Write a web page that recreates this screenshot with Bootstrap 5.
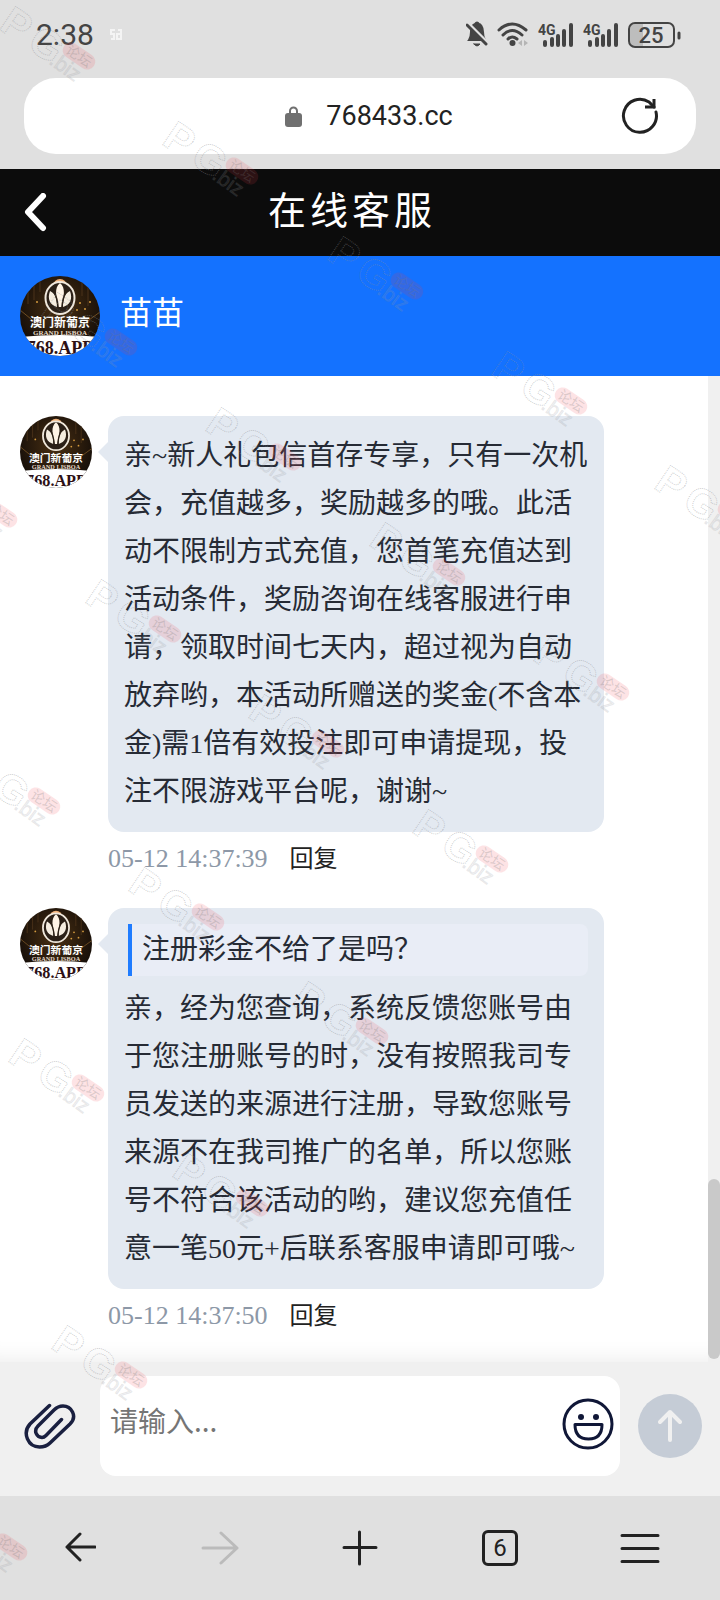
<!DOCTYPE html>
<html lang="zh-CN">
<head>
<meta charset="utf-8">
<meta name="viewport" content="width=device-width, initial-scale=1">
<title>在线客服</title>
<link href="https://cdn.jsdelivr.net/npm/bootstrap@5.3.0/dist/css/bootstrap.min.css" rel="stylesheet">
<style>
  body { font-family: Roboto, "Noto Sans CJK SC", sans-serif; background: #fff; color: #222; }
  svg { display: block; flex: none; }
  .chrome { background: #e0e0e0; }
  .status { height: 78px; padding: 0 38px 8px 36px; color: #444; }
  .clock { font-size: 30px; font-weight: 400; line-height: 36px; }
  .address { height: 76px; margin: 0 24px; padding-left: 18px; border-radius: 32px; }
  .url { font-size: 27px; line-height: 36px; color: #222; }
  .reload { right: 36px; top: 18px; }
  .titlebar { height: 87px; margin-top: 15px; padding: 0 16px 4px 0; background: #0c0c0c; }
  .titlebar h1 { font-size: 38px; line-height: 48px; letter-spacing: 4px; font-weight: 400; }
  .back { left: 20px; top: 24px; }
  .agent { height: 120px; background: #1472ff; padding: 0 20px; gap: 20px; }
  .agent-name { font-size: 32px; line-height: 40px; padding-bottom: 6px; }
  .chat { font-family: "Liberation Serif", "Noto Sans CJK SC", serif; font-size: 28px; line-height: 48px; }
  .thread { min-width: 0; padding: 40px 104px 24px 20px; box-shadow: inset 0 -24px 20px -20px #eee; }
  .msg { gap: 16px; }
  .msg + .msg { margin-top: 28px; }
  .bubble { background: #e3e9f1; color: #262b35; border-radius: 16px; padding: 16px; }
  .bubble::before { content: ""; position: absolute; left: -10px; top: 26px; border: 10px solid transparent; border-left: 0; border-right-color: #e3e9f1; }
  .quote { background: #e9edf6; border-left: 4px solid #1f7cff; border-radius: 0 8px 8px 0; margin: 0 0 9px 4px; padding: 2px 10px; }
  .meta { height: 48px; padding-top: 11px; gap: 22px; line-height: 32px; }
  .stamp { font-size: 26px; color: #8d98a7; }
  .reply { font-size: 24px; line-height: 32px; color: #222; }
  .track { flex: none; width: 12px; background: #f0f0f0; padding-bottom: 3px; }
  .thumb { height: 180px; background: #c9c9c9; border-radius: 6px; }
  .composer { height: 134px; background: #f0f0f0; padding: 14px 18px 20px 24px; }
  .entry { height: 100px; margin: 0 18px 0 24px; }
  .entry textarea { font-family: "Noto Sans CJK SC", sans-serif; font-size: 28px; line-height: 40px; border-radius: 16px; padding: 24px 72px 24px 10px; resize: none; outline: 0; }
  .entry textarea::placeholder { color: #757575; }
  .smile { right: 6px; top: 22px; }
  .send { width: 64px; height: 64px; background: #c5ccd6; }
  .tools { height: 104px; padding: 0 10px; }
  .tabcount { width: 36px; height: 36px; border: 3px solid #222; border-radius: 6px; font-size: 24px; line-height: 30px; color: #222; }
  .stamps { pointer-events: none; }
</style>
</head>
<body>
<svg width="0" height="0" class="position-absolute" aria-hidden="true">
  <defs>
    <radialGradient id="gold" cx=".5" cy=".4" r=".6"><stop offset="0" stop-color="#4a3013"/><stop offset="1" stop-color="#120c08"/></radialGradient>
    <clipPath id="disc"><circle cx="40" cy="40" r="40"/></clipPath>
    <symbol id="avatar" viewBox="0 0 80 80">
      <g clip-path="url(#disc)">
        <rect width="80" height="80" fill="url(#gold)"/>
        <path d="M8 10v18M14 4v20M20 2v14M62 4v16M68 8v22" stroke="#4b321a"/>
        <path d="M0 34L22 52M80 36L58 52" stroke="#6e4d22"/>
        <g fill="#d39a3e"><circle cx="60" cy="27" r="1"/><circle cx="65" cy="33" r="1"/><circle cx="57" cy="34" r="1"/><circle cx="17" cy="26" r="1"/><circle cx="70" cy="26" r="1"/></g>
        <circle cx="40" cy="10" r="7" fill="#f2b27a"/>
        <ellipse cx="40" cy="22" rx="14.500" ry="16" fill="#2b2017" stroke="#f0e8dc" stroke-width="2"/>
        <path d="M40 7c6 5 4 13 1.500 24h-3C36 20 34 12 40 7z" fill="#fff4e6"/>
        <path d="M30 15c6 3 7 9 7 16-7-2-10-8-7-16zM50 15c-6 3-7 9-7 16 7-2 10-8 7-16z" fill="#f5ede0"/>
        <path d="M33 14c3 5 5 11 5 19M47 14c-3 5-5 11-5 19" stroke="#2b2017" fill="none" stroke-width="1.500"/>
        <path d="M0 61q40-4 80 0v19H0z" fill="#fff"/>
        <text x="40" y="51" text-anchor="middle" font-family="Noto Sans CJK SC" font-weight="700" font-size="12" fill="#fff">澳门新葡京</text>
        <text x="40" y="59" text-anchor="middle" font-family="Liberation Serif" font-weight="700" font-size="7" fill="#e6dccb">GRAND LISBOA</text>
        <text x="40" y="78" text-anchor="middle" font-family="Liberation Serif" font-weight="700" font-size="18" fill="#2d1014">768.APP</text>
      </g>
    </symbol>
    <g id="stampmark">
      <g transform="translate(0 25) rotate(34)" fill="none" stroke="#8c8f94" stroke-opacity=".45" stroke-dasharray="1 1" font-family="Liberation Sans" font-weight="700" font-size="41"><text x="-3" y="0">P</text><text x="31" y="0">G</text></g>
      <text transform="translate(48 58) rotate(36)" font-family="Liberation Sans" font-size="21" fill="#a0a3a8" fill-opacity=".15" stroke="#8c8f94" stroke-opacity=".15">.biz</text>
      <g transform="translate(79 51) rotate(34)">
        <rect x="-18" y="-8" width="36" height="16" rx="8" fill="#f03c46" fill-opacity=".14"/>
        <text y="5" text-anchor="middle" font-family="Noto Sans CJK SC" font-size="14" fill="#777" fill-opacity=".25">论坛</text>
      </g>
    </g>
    <g id="bars" fill="#444">
      <text x="0" y="12" font-family="Roboto" font-weight="700" font-size="14">4G</text>
      <rect x="5" y="17" width="4" height="7" rx="2"/><rect x="12" y="14" width="4" height="10" rx="2"/><rect x="18" y="11" width="4" height="13" rx="2"/><rect x="24" y="6" width="4" height="18" rx="2"/><rect x="31" y="0" width="4" height="24" rx="2"/>
    </g>
  </defs>
</svg>

<div class="position-relative min-vh-100 d-flex flex-column overflow-hidden">
  <header class="chrome">
    <div class="status d-flex align-items-center justify-content-between">
      <div class="d-flex align-items-center gap-3">
        <span class="clock">2:38</span>
        <svg width="12" height="12" viewBox="0 0 12 12" fill="none" stroke="#f4f4f4" stroke-width="2"><path d="M5 1H1v4h3v5H1M8 1h3v4H7v5h4V6"/></svg>
      </div>
      <svg width="216" height="28" viewBox="0 0 216 28" fill="none" stroke="#444" stroke-linecap="round">
        <path d="M3 19H19Q17 16 17 11C17 5 14 3 13 3Q11 0 9 3C6 4 5 7 5 11Q5 16 3 19Z" fill="#444" stroke-width="2"/><path d="M8 23h6q-3 4-6 0z" fill="#444" stroke-width="1"/>
        <path d="M2 2L21 21" stroke="#e0e0e0" stroke-width="3"/><path d="M1 4L20 23" stroke-width="3"/>
        <path d="M33 9Q46-3 60 9M37 14Q46 5 56 14M42 18Q46 14 51 18" stroke-width="3"/><circle cx="46.500" cy="22" r="3" fill="#444" stroke="none"/>
        <path d="M52 22l4-3v6zM62 22l-4-3v6z" fill="#b5b5b5" stroke="none"/>
        <g stroke="none"><use href="#bars" x="72" y="2"/><use href="#bars" x="117" y="2"/></g>
        <path d="M177 3H169Q164 3 164 8V20Q164 25 169 25H177Z" fill="#bdbdbd" stroke="none"/>
        <rect x="163" y="2" width="45" height="24" rx="6" stroke-width="2"/><path d="M213 12v5" stroke-width="3"/>
        <text x="185" y="22" text-anchor="middle" font-family="Roboto" font-weight="500" font-size="22" fill="#444" stroke="none">25</text>
      </svg>
    </div>
    <div class="address bg-white position-relative d-flex align-items-center justify-content-center">
      <svg class="me-4" width="17" height="21" viewBox="0 0 17 21"><rect y="7" width="17" height="14" rx="3" fill="#707070"/><path d="M5 9V5a3.500 3.500 0 0 1 7 0v4" fill="none" stroke="#707070" stroke-width="2"/></svg>
      <span class="url">768433.cc</span>
      <button class="reload btn border-0 p-0 position-absolute" aria-label="刷新"><svg width="40" height="40" viewBox="0 0 40 40" fill="none" stroke="#222" stroke-width="3"><path d="M36 16A16.500 16.500 0 1 1 29 6L34 11" stroke-linecap="round"/><path d="M34 3v8h-9"/></svg></button>
    </div>
    <div class="titlebar position-relative d-flex align-items-center justify-content-center text-white">
      <button class="back btn border-0 p-0 position-absolute" aria-label="返回"><svg width="32" height="40" viewBox="0 0 32 40" fill="none" stroke="#fff" stroke-width="6" stroke-linecap="round" stroke-linejoin="round"><path d="M23 3L8 19L23 35"/></svg></button>
      <h1 class="m-0">在线客服</h1>
    </div>
  </header>

  <section class="agent d-flex align-items-center text-white">
    <svg width="80" height="80" role="img" aria-label="头像"><use href="#avatar"/></svg>
    <span class="agent-name">苗苗</span>
  </section>

  <main class="chat d-flex flex-grow-1">
    <div class="thread flex-grow-1">
      <article class="msg d-flex">
        <svg width="72" height="72" role="img" aria-label="头像"><use href="#avatar"/></svg>
        <div class="flex-grow-1">
          <div class="bubble position-relative">亲~新人礼包信首存专享，只有一次机会，充值越多，奖励越多的哦。此活动不限制方式充值，您首笔充值达到活动条件，奖励咨询在线客服进行申请，领取时间七天内，超过视为自动放弃哟，本活动所赠送的奖金(不含本金)需1倍有效投注即可申请提现，投注不限游戏平台呢，谢谢~</div>
          <div class="meta d-flex align-items-start"><time class="stamp">05-12 14:37:39</time><button class="reply btn border-0 p-0">回复</button></div>
        </div>
      </article>
      <article class="msg d-flex">
        <svg width="72" height="72" role="img" aria-label="头像"><use href="#avatar"/></svg>
        <div class="flex-grow-1">
          <div class="bubble position-relative">
            <div class="quote">注册彩金不给了是吗？</div>
            亲，经为您查询，系统反馈您账号由于您注册账号的时，没有按照我司专员发送的来源进行注册，导致您账号来源不在我司推广的名单，所以您账号不符合该活动的哟，建议您充值任意一笔50元+后联系客服申请即可哦~
          </div>
          <div class="meta d-flex align-items-start"><time class="stamp">05-12 14:37:50</time><button class="reply btn border-0 p-0">回复</button></div>
        </div>
      </article>
    </div>
    <div class="track d-flex flex-column justify-content-end"><div class="thumb"></div></div>
  </main>

  <form class="composer d-flex align-items-center">
    <button type="button" class="btn border-0 p-0" aria-label="附件"><svg width="52" height="48" viewBox="0 0 52 48" fill="none" stroke="#1a2040" stroke-width="3.500" stroke-linecap="round"><path d="M25.500 3.500L6 22C-2 31 4 45 15.500 45Q22 45 26 41L46 22C54 14 47 4 39 4Q34 4 30 8L14 24C9 29 13 35.500 18 35.500Q20 35.500 22 33.500L37.500 17.500"/></svg></button>
    <div class="entry flex-grow-1 position-relative">
      <textarea class="border-0 bg-white w-100 h-100 d-block" placeholder="请输入..." aria-label="消息"></textarea>
      <button type="button" class="smile btn border-0 p-0 position-absolute" aria-label="表情"><svg width="52" height="52" viewBox="0 0 52 52" fill="none" stroke="#101737" stroke-width="3"><circle cx="26" cy="26" r="24"/><path d="M13 26.500H40Q40 41 26.500 41T13 26.500Z" stroke-linejoin="round"/><g fill="#101737" stroke="none"><circle cx="19" cy="19" r="3"/><circle cx="34" cy="19" r="3"/></g></svg></button>
    </div>
    <button type="submit" class="send btn border-0 p-0 rounded-circle d-flex align-items-center justify-content-center" aria-label="发送"><svg width="24" height="34" viewBox="0 0 24 34" fill="none" stroke="#f0f0f0" stroke-width="4" stroke-linecap="round" stroke-linejoin="round"><path d="M12 31V3M2 13L12 3L22 13"/></svg></button>
  </form>

  <nav class="tools chrome d-flex align-items-center">
    <button class="btn border-0 p-0 d-flex justify-content-center flex-fill w-100" aria-label="后退"><svg width="32" height="32" viewBox="0 0 32 32" fill="none" stroke="#222" stroke-width="3" stroke-linecap="round" stroke-linejoin="round"><path d="M31 15H3M16 2L3 15L16 28"/></svg></button>
    <button class="btn border-0 p-0 d-flex justify-content-center flex-fill w-100" aria-label="前进"><svg width="38" height="36" viewBox="0 0 38 36" fill="none" stroke="#bbb" stroke-width="3" stroke-linecap="round" stroke-linejoin="round"><path d="M2 18H36M20 3L36 18L20 33"/></svg></button>
    <button class="btn border-0 p-0 d-flex justify-content-center flex-fill w-100" aria-label="新建标签页"><svg width="36" height="36" viewBox="0 0 36 36" fill="none" stroke="#222" stroke-width="3" stroke-linecap="round"><path d="M2 17.500H34M17.500 2V34"/></svg></button>
    <button class="btn border-0 p-0 d-flex justify-content-center flex-fill w-100" aria-label="标签页"><span class="tabcount">6</span></button>
    <button class="btn border-0 p-0 d-flex justify-content-center flex-fill w-100" aria-label="菜单"><svg width="40" height="32" viewBox="0 0 40 32" stroke="#222" stroke-width="3" stroke-linecap="round"><path d="M2 3.500H38M2 16.500H38M2 29.500H38"/></svg></button>
  </nav>

  <svg class="stamps position-absolute top-0 start-0 w-100 h-100" aria-hidden="true">
    <use href="#stampmark" x="0" y="5"/><use href="#stampmark" x="163" y="120"/><use href="#stampmark" x="328" y="235"/><use href="#stampmark" x="492" y="350"/><use href="#stampmark" x="655" y="464"/>
    <use href="#stampmark" x="42" y="291"/><use href="#stampmark" x="206" y="406"/><use href="#stampmark" x="370" y="521"/><use href="#stampmark" x="534" y="636"/>
    <use href="#stampmark" x="-78" y="463"/><use href="#stampmark" x="86" y="578"/><use href="#stampmark" x="249" y="693"/><use href="#stampmark" x="413" y="808"/>
    <use href="#stampmark" x="-35" y="750"/><use href="#stampmark" x="129" y="866"/><use href="#stampmark" x="293" y="980"/>
    <use href="#stampmark" x="9" y="1037"/><use href="#stampmark" x="173" y="1152"/><use href="#stampmark" x="52" y="1324"/><use href="#stampmark" x="-68" y="1496"/>
  </svg>
</div>
<script src="https://cdn.jsdelivr.net/npm/bootstrap@5.3.0/dist/js/bootstrap.bundle.min.js"></script>
</body>
</html>
